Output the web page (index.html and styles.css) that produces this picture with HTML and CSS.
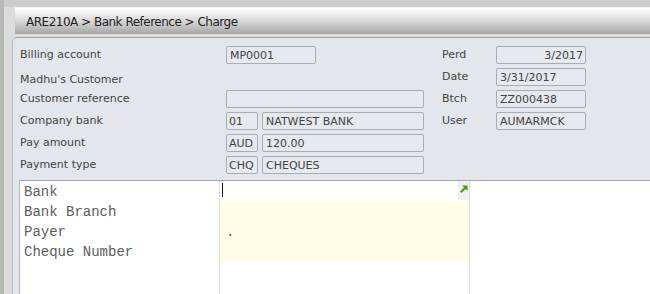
FILE: index.html
```html
<!DOCTYPE html>
<html lang="en">
<head>
    <meta charset="UTF-8">
    <meta name="viewport" content="width=device-width, initial-scale=1.0">
    <title>ARE210A - Bank Reference - Charge</title>
    <link rel="stylesheet" href="styles.css">
</head>
<body>
    <div class="frame">
        <div class="title-bar">ARE210A &gt; Bank Reference &gt; Charge</div>

        <div class="panel">
            <div class="header-form">
                <div class="label">Billing account</div>
                <div class="cell"><div class="field w90">MP0001</div></div>
                <div class="label side">Perd</div>
                <div class="field right">3/2017</div>

                <div class="label low">Madhu's Customer</div>
                <div class="cell"></div>
                <div class="label side">Date</div>
                <div class="field">3/31/2017</div>

                <div class="label">Customer reference</div>
                <div class="cell"><div class="field wide"></div></div>
                <div class="label side">Btch</div>
                <div class="field">ZZ000438</div>

                <div class="label">Company bank</div>
                <div class="cell pair">
                    <div class="field code">01</div>
                    <div class="field wide">NATWEST BANK</div>
                </div>
                <div class="label side">User</div>
                <div class="field">AUMARMCK</div>

                <div class="label">Pay amount</div>
                <div class="cell pair">
                    <div class="field code">AUD</div>
                    <div class="field wide">120.00</div>
                </div>
                <div class="cell span2"></div>

                <div class="label">Payment type</div>
                <div class="cell pair">
                    <div class="field code">CHQ</div>
                    <div class="field wide">CHEQUES</div>
                </div>
                <div class="cell span2"></div>
            </div>

            <div class="detail">
                <div class="detail-names">
                    <div class="detail-row">Bank</div>
                    <div class="detail-row">Bank Branch</div>
                    <div class="detail-row">Payer</div>
                    <div class="detail-row">Cheque Number</div>
                </div>
                <div class="detail-values">
                    <div class="detail-row value-row">
                        <span class="caret"></span>
                        <span class="expand">
                            <svg width="8" height="8" viewBox="0 0 8 8">
                                <polygon points="2,0.5 7.5,0.5 7.5,6" fill="#4f9a17"/>
                                <line x1="0.8" y1="7.2" x2="5.4" y2="2.6" stroke="#4f9a17" stroke-width="2.2"/>
                            </svg>
                        </span>
                    </div>
                    <div class="detail-row value-row readonly"></div>
                    <div class="detail-row value-row readonly">.</div>
                    <div class="detail-row value-row readonly"></div>
                </div>
            </div>
        </div>
    </div>
</body>
</html>
```

FILE: styles.css
```css
:root {
    --page-bg: #d8d8d8;
    --panel-bg: #e3e6ea;
    --field-border: #a9adb1;
    --text-color: #444444;
}

html, body {
    margin: 0;
    height: 100%;
}

body {
    font-family: "DejaVu Sans", Verdana, sans-serif;
    font-size: 11px;
    color: var(--text-color);
    background: var(--page-bg);
    overflow: hidden;
}

.frame {
    height: 100%;
    box-sizing: border-box;
    border-left: 4px solid #b5b9b3;
    padding-top: 7px;
    display: flex;
    flex-direction: column;
    background: linear-gradient(#cdcdcd 0, #cdcdcd 7px, #dcdcdc 7px);
}

.title-bar {
    margin-left: 11px;
    height: 27px;
    line-height: 28px;
    padding-left: 11px;
    font-size: 12px;
    letter-spacing: -0.5px;
    color: #1e1e1e;
    border-top: 1px solid #f4f4f4;
    box-sizing: border-box;
    background: linear-gradient(#ffffff 0%, #ededed 25%, #c4c4c4 70%, #a6a6a6 100%);
}

.panel {
    flex: 1;
    margin: 3px 0 0 8px;
    border-top: 1px solid #a8a8a8;
    border-left: 1px solid #b9bcbf;
    border-top-left-radius: 5px;
    background: var(--panel-bg);
    display: flex;
    flex-direction: column;
}

.header-form {
    display: grid;
    grid-template-columns: 206px 198px 18px 54px 90px;
    grid-auto-rows: 18px;
    row-gap: 4px;
    padding: 8px 0 0 7px;
}

.label {
    line-height: 14px;
    padding-top: 2px;
    white-space: nowrap;
}

.label.low {
    padding-top: 5px;
}

.label.side {
    grid-column: 4;
}

.cell.pair {
    display: flex;
    gap: 4px;
}

.cell.span2 {
    grid-column: 3 / span 3;
}

.field {
    box-sizing: border-box;
    height: 18px;
    line-height: 17px;
    padding: 0 2px 0 3px;
    border: 1px solid var(--field-border);
    border-radius: 2px;
    background: #e6e9ed;
    white-space: nowrap;
    overflow: hidden;
}

.field.right {
    text-align: right;
}

.field.w90 {
    width: 90px;
}

.field.wide {
    flex: 1;
}

.field.code {
    width: 32px;
    padding-left: 2px;
}

.detail {
    flex: 1;
    margin: 6px 0 0 6px;
    border-top: 1px solid #a2a5a9;
    border-left: 1px solid #b5b8bb;
    background: #ffffff;
    display: flex;
    align-items: flex-start;
    font-family: "Liberation Mono", "Courier New", monospace;
    font-size: 14px;
    color: #5c5c5c;
}

.detail-names {
    width: 199px;
    border-right: 1px solid #dcdcdc;
    align-self: stretch;
}

.detail-values {
    width: 249px;
    border-right: 1px solid #dcdcdc;
    align-self: stretch;
}

.detail-row {
    height: 20px;
    line-height: 22px;
    padding-left: 4px;
    white-space: nowrap;
}

.value-row {
    position: relative;
    padding-left: 6px;
}

.value-row.readonly {
    background: #fffde8;
    margin-right: 1px;
}

.caret {
    position: absolute;
    left: 2px;
    top: 2px;
    width: 1px;
    height: 14px;
    background: #111111;
}

.expand {
    position: absolute;
    right: 0;
    top: 0;
    width: 11px;
    height: 19px;
    background: #eef0f2;
    display: flex;
    justify-content: center;
    padding-top: 4px;
    box-sizing: border-box;
}
```
